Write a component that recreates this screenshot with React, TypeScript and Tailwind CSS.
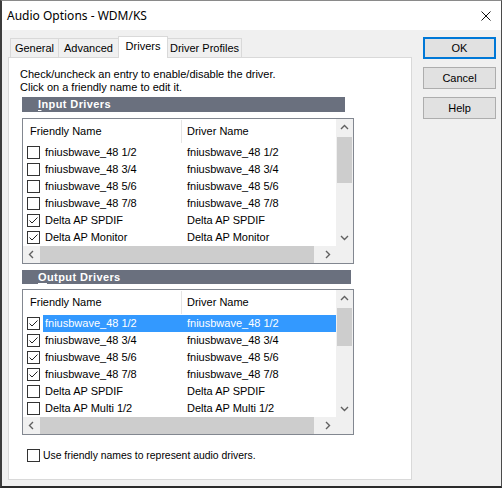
import React from "react";

type Row = { name: string; checked: boolean };

const inputRows: Row[] = [
  { name: "fniusbwave_48 1/2", checked: false },
  { name: "fniusbwave_48 3/4", checked: false },
  { name: "fniusbwave_48 5/6", checked: false },
  { name: "fniusbwave_48 7/8", checked: false },
  { name: "Delta AP SPDIF", checked: true },
  { name: "Delta AP Monitor", checked: true },
];

const outputRows: Row[] = [
  { name: "fniusbwave_48 1/2", checked: true },
  { name: "fniusbwave_48 3/4", checked: true },
  { name: "fniusbwave_48 5/6", checked: true },
  { name: "fniusbwave_48 7/8", checked: true },
  { name: "Delta AP SPDIF", checked: false },
  { name: "Delta AP Multi 1/2", checked: false },
];

function CheckBox({ checked }: { checked: boolean }) {
  return (
    <span className="w-[13px] h-[13px] border border-[#333333] bg-white flex items-center justify-center shrink-0">
      {checked && (
        <svg width="11" height="11" viewBox="0 0 11 11">
          <path d="M1.5 5.5 L4 8 L9.5 2.5" stroke="#222" strokeWidth="1" fill="none" />
        </svg>
      )}
    </span>
  );
}

function Chevron({ dir }: { dir: "up" | "down" | "left" | "right" }) {
  const d = {
    up: "M1 6 L4.5 2.5 L8 6",
    down: "M1 3 L4.5 6.5 L8 3",
    left: "M6 1 L2.5 4.5 L6 8",
    right: "M3 1 L6.5 4.5 L3 8",
  }[dir];
  return (
    <svg width="9" height="9" viewBox="0 0 9 9">
      <path d={d} stroke="#606060" strokeWidth="1.4" fill="none" />
    </svg>
  );
}

function DriverList({ rows, selected, thumbH }: { rows: Row[]; selected: number; thumbH: number }) {
  return (
    <div className="w-[332px] h-[146px] border border-[#828790] bg-white flex flex-col">
      <div className="flex h-[127px]">
        <div className="w-[313px] flex flex-col overflow-hidden">
          <div className="h-[25px] flex items-center shrink-0">
            <div className="w-[158px] pl-[7px]">Friendly Name</div>
            <div className="w-px h-[23px] bg-[#e5e5e5]" />
            <div className="pl-[5px]">Driver Name</div>
          </div>
          {rows.map((r, i) => (
            <div key={i} className="h-[17px] flex items-center shrink-0">
              <div className="w-[20px] pl-[4px] flex items-center">
                <CheckBox checked={r.checked} />
              </div>
              <div
                className={`flex-1 h-full flex items-center ${
                  i === selected ? "bg-[#3399ff] text-white" : ""
                }`}
              >
                <span className="w-[142px] pl-[2px]">{r.name}</span>
                <span className="pl-[2px]">{r.name}</span>
              </div>
            </div>
          ))}
        </div>
        <div className="w-[17px] bg-[#f0f0f0] flex flex-col">
          <div className="h-[17px] flex items-center justify-center">
            <Chevron dir="up" />
          </div>
          <div className="flex-1">
            <div className="mt-px mx-px bg-[#cdcdcd]" style={{ height: thumbH }} />
          </div>
          <div className="h-[17px] flex items-center justify-center">
            <Chevron dir="down" />
          </div>
        </div>
      </div>
      <div className="h-[17px] flex bg-[#f0f0f0]">
        <div className="w-[17px] flex items-center justify-center">
          <Chevron dir="left" />
        </div>
        <div className="w-[274px] bg-[#cdcdcd]" />
        <div className="w-[5px]" />
        <div className="w-[17px] flex items-center justify-center">
          <Chevron dir="right" />
        </div>
        <div className="w-[17px]" />
      </div>
    </div>
  );
}

function SectionBar({ first, rest, w, h }: { first: string; rest: string; w: string; h: string }) {
  return (
    <div className={`${w} ${h} ml-[2px] bg-[#6a707e] flex items-center pl-[16px] text-white font-bold tracking-[0.4px]`}>
      <span className="underline underline-offset-[2px]">{first}</span>
      <span>{rest}</span>
    </div>
  );
}

function Tab({ label, active, w }: { label: string; active?: boolean; w: string }) {
  return active ? (
    <div
      className={`${w} h-[22px] -mb-px -ml-px relative z-10 bg-white border-t border-l border-r border-[#d9d9d9] flex items-center justify-center pb-[2px]`}
    >
      {label}
    </div>
  ) : (
    <div
      className={`${w} h-[19px] -ml-px bg-[#f0f0f0] border-t border-l border-r border-[#d9d9d9] flex items-center justify-center`}
    >
      {label}
    </div>
  );
}

function Button({ label, primary }: { label: string; primary?: boolean }) {
  return (
    <div
      className={`w-[73px] h-[22px] bg-[#e1e1e1] flex items-center justify-center ${
        primary ? "border-2 border-[#0078d7]" : "border border-[#adadad]"
      }`}
    >
      {label}
    </div>
  );
}

export default function App() {
  return (
    <div className="w-[502px] h-[488px] flex flex-col border-l-2 border-r border-t border-b-2 border-l-[#3c3c3c] border-r-[#4a4a4a] border-t-[#8a8a8a] border-b-[#2b2b2b] font-['Liberation_Sans',Arial,sans-serif] text-[11px] text-black leading-[13px]">
      {/* title bar */}
      <div className="h-[29px] bg-white flex items-center justify-between shrink-0">
        <span className="pl-[5px] text-[12px] font-['Noto_Sans','Liberation_Sans',sans-serif]">
          Audio Options - WDM/KS
        </span>
        <svg width="10" height="10" viewBox="0 0 10 10" className="mr-[10px]">
          <path d="M0.5 0.5 L9.5 9.5 M9.5 0.5 L0.5 9.5" stroke="#111" strokeWidth="1" />
        </svg>
      </div>

      {/* dialog body */}
      <div className="flex-1 bg-[#f0f0f0] flex pl-[6px] pt-[6px]">
        <div className="w-[404px] flex flex-col">
          <div className="h-[21px] flex items-end pl-[3px]">
            <Tab label="General" w="w-[49px]" />
            <Tab label="Advanced" w="w-[61px]" />
            <Tab label="Drivers" w="w-[50px]" active />
            <Tab label="Driver Profiles" w="w-[75px]" />
          </div>
          <div className="h-[423px] border border-[#d9d9d9] bg-white flex flex-col pl-[11px] pt-[10px]">
            <p>Check/uncheck an entry to enable/disable the driver.</p>
            <p>Click on a friendly name to edit it.</p>

            <div className="mt-[3px]">
              <SectionBar first="I" rest="nput Drivers" w="w-[323px]" h="h-[15px]" />
            </div>
            <div className="mt-[6px] ml-[2px]">
              <DriverList rows={inputRows} selected={-1} thumbH={46} />
            </div>

            <div className="mt-[6px]">
              <SectionBar first="O" rest="utput Drivers" w="w-[329px]" h="h-[14px]" />
            </div>
            <div className="mt-[5px] ml-[2px]">
              <DriverList rows={outputRows} selected={0} thumbH={38} />
            </div>

            <div className="mt-[14px] ml-[7px] flex items-center">
              <CheckBox checked={false} />
              <span className="ml-[3px] text-[10.4px]">Use friendly names to represent audio drivers.</span>
            </div>
          </div>
        </div>

        <div className="ml-[11px] pt-px flex flex-col gap-[8px]">
          <Button label="OK" primary />
          <Button label="Cancel" />
          <Button label="Help" />
        </div>
      </div>
    </div>
  );
}
